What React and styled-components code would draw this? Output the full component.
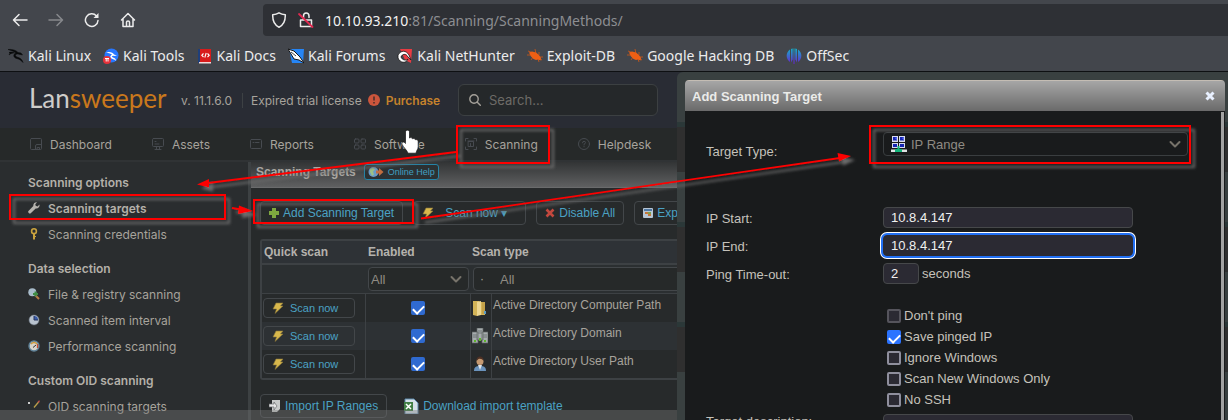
import React from 'react';
import styled, { createGlobalStyle, css } from 'styled-components';

const sans = '"Liberation Sans", Arial, sans-serif';
const brand = 'Inter, "Noto Sans", sans-serif';

const GlobalStyle = createGlobalStyle`
  * { box-sizing: border-box; }
  body { margin: 0; background: #292c2e; overflow: hidden; }
  a { color: inherit; text-decoration: none; }
  button, input, select { font: inherit; color: inherit; margin: 0; }
  svg { display: block; flex: none; }
`;

const Page = styled.div`
  display: flex;
  flex-direction: column;
  height: 100vh;
  overflow: hidden;
  position: relative;
`;

/* browser chrome */
const Chrome = styled.header`
  flex: none;
  background: #43464c;
  border-bottom: 1px solid #0e1012;
  font-family: "Noto Sans", sans-serif;
  color: #ececec;
`;
const Toolbar = styled.div`
  display: flex;
  align-items: center;
  height: 40px;
`;
const NavButtons = styled.div`
  display: flex;
  gap: 20px;
  padding-left: 12px;
  width: 263px;
`;
const IconButton = styled.button`
  border: 0;
  padding: 0;
  background: none;
  width: 16px;
  height: 16px;
  opacity: ${(p) => (p.disabled ? 0.4 : 1)};
`;
const CloseButton = styled.button`
  border: 0;
  padding: 0;
  background: none;
`;
const AddressBar = styled.div`
  flex: 1;
  height: 32px;
  display: flex;
  align-items: center;
  gap: 11px;
  padding-left: 8px;
  background: #2e3035;
  border-radius: 4px 0 0 4px;
`;
const Url = styled.span`
  font-size: 14px;
  color: #8d8e92;
  b { font-weight: 400; color: #f2f2f2; }
`;
const Bookmarks = styled.nav`
  display: flex;
  align-items: center;
  gap: 12px;
  height: 31px;
  padding-left: 8px;
  white-space: nowrap;
`;
const Bookmark = styled.a`
  display: flex;
  align-items: center;
  gap: 4px;
  font-size: 14px;
`;

/* application */
const AppArea = styled.div`
  flex: 1;
  min-height: 0;
  display: flex;
  flex-direction: column;
  position: relative;
  font-family: ${brand};
  color: #a7a39c;
`;
const AppHeader = styled.div`
  flex: none;
  display: flex;
  align-items: center;
  height: 56px;
  padding-left: 29px;
  background: #292c34;
  font-size: 12px;
`;
const Logo = styled.a`
  width: 152px;
  font-family: Lato, sans-serif;
  font-size: 26px;
  line-height: 32px;
  color: #cfcdca;
  padding-bottom: 4px;
  span { color: #c9781c; }
`;
const Version = styled.span`
  width: 62px;
  border-right: 1px solid #3d4144;
`;
const License = styled.span`
  display: flex;
  align-items: center;
  gap: 6px;
  padding-left: 8px;
  width: 215px;
  white-space: nowrap;
`;
const Purchase = styled.a`
  color: #c5822c;
  font-weight: 600;
`;
const SearchBox = styled.label`
  display: flex;
  align-items: center;
  gap: 8px;
  width: 200px;
  height: 32px;
  padding-left: 10px;
  border: 1px solid #3c4042;
  border-radius: 6px;
  background: #25282a;
`;
const SearchInput = styled.input`
  width: 120px;
  border: 0;
  background: none;
  padding: 0;
  font-size: 13px;
  &::placeholder { color: #6d6b67; }
`;
const MainNav = styled.nav`
  flex: none;
  display: flex;
  align-items: center;
  gap: 40px;
  height: 34px;
  padding-left: 30px;
  background: #262929;
  border-bottom: 2px solid #303335;
`;
const NavLink = styled.a`
  display: flex;
  align-items: center;
  gap: 8px;
  font-size: 12px;
`;
const Columns = styled.div`
  flex: 1;
  min-height: 0;
  display: flex;
`;
const Sidebar = styled.aside`
  flex: none;
  width: 251px;
  padding: 8px 0 0 28px;
  border-right: 3px solid #3d4143;
  background: #2a2d2f;
  font-size: 12px;
  overflow: hidden;
`;
const SideHeading = styled.div`
  line-height: 26px;
  font-weight: 600;
  color: #b4b0a9;
  &:not(:first-child) { margin-top: 8px; }
`;
const SideLink = styled.a`
  display: flex;
  align-items: center;
  gap: 8px;
  height: 26px;
  padding-bottom: 2px;
  ${(p) => p.$active && css`font-weight: 600; color: #b4b0a9;`}
`;
const Main = styled.main`
  flex: 1;
  min-width: 0;
  overflow: hidden;
  background: #272a2b;
  font-family: ${sans};
  font-size: 12px;
`;
const TitleBar = styled.div`
  display: flex;
  align-items: center;
  gap: 8px;
  height: 26px;
  padding: 0 0 6px 5px;
  background: linear-gradient(#323435, #5f6061);
  border-bottom: 1px solid #6a6b6c;
`;
const PageTitle = styled.h1`
  margin: 0;
  font-size: 12px;
  color: #aaa7a2;
`;
const HelpLink = styled.a`
  display: flex;
  align-items: center;
  gap: 4px;
  height: 16px;
  padding: 0 3px;
  border: 1px solid #2583a6;
  border-radius: 3px;
  background: #2c3133;
  color: #41a0c2;
  font-size: 9px;
`;
const Content = styled.div`
  padding: 13px 0 0 9px;
`;
const ButtonRow = styled.div`
  display: flex;
  align-items: center;
  gap: ${(p) => p.$gap || 10}px;
`;
const Button = styled.button`
  display: flex;
  align-items: center;
  gap: ${(p) => p.$gap || 4}px;
  height: ${(p) => p.$height || 24}px;
  padding: 0 ${(p) => p.$end || 8}px 0 8px;
  border: 1px solid #43474a;
  border-radius: 4px;
  background: none;
  color: #4ba2c4;
  font-size: ${(p) => p.$size || 12}px;
  white-space: nowrap;
`;
const TargetTable = styled.table`
  width: 100%;
  margin: 14px 0;
  table-layout: fixed;
  border-collapse: separate;
  border-spacing: 0;
  border: 2px solid #3d4144;
  border-right: 0;
  border-radius: 3px;
`;
const HeadCell = styled.th`
  width: ${(p) => p.$width || 'auto'};
  height: 24px;
  padding: 0 0 0 ${(p) => p.$inset || 2}px;
  text-align: left;
  white-space: nowrap;
  color: #b5b2ad;
  background: #2e3236;
  border-bottom: 2px solid #3d4144;
`;
const FilterCell = styled.td`
  height: 29px;
  padding: 0 1px 0 3px;
  background: #2b2f31;
  border-bottom: 1px solid #3d4144;
`;
const BodyCell = styled.td`
  height: 28px;
  padding: ${(p) => (p.$name ? '4px 1px' : '0 1px')};
  border-left: ${(p) => (p.$line ? '1px solid #3d4144' : '0')};
  text-align: ${(p) => (p.$center ? 'center' : 'left')};
  vertical-align: ${(p) => (p.$name ? 'top' : 'middle')};
`;
const BodyRow = styled.tr`
  background: ${(p) => (p.$odd ? '#2d3134' : '#272a2b')};
`;
const SelectBox = styled.div`
  position: relative;
  display: flex;
  align-items: center;
  width: 100%;
  height: 24px;
  border: 1px solid ${(p) => (p.$dark ? '#3a3e40' : '#43474a')};
  border-radius: 4px;
  background: ${(p) => (p.$dark ? '#191b1c' : '#262929')};
`;
const Select = styled.select`
  appearance: none;
  width: 100%;
  height: 100%;
  border: 0;
  padding: 0 0 0 ${(p) => p.$inset}px;
  background: none;
  color: #8f8b83;
  font-size: 13px;
  outline: none;
`;
const SelectMark = styled.span`
  position: absolute;
  pointer-events: none;
  ${(p) => (p.$left ? `left: ${p.$left}px;` : 'right: 6px;')}
`;
const Check = styled.input`
  appearance: none;
  flex: none;
  display: inline-grid;
  place-items: center;
  vertical-align: middle;
  width: 14px;
  height: 14px;
  border: 2px solid ${(p) => (p.$muted ? '#55545c' : '#8f8f9d')};
  border-radius: 2px;
  background: #2b2a33;
  &:checked {
    border-color: ${(p) => p.$blue || '#2b73ff'};
    background: ${(p) => p.$blue || '#2b73ff'};
  }
  &:checked::after {
    content: '';
    width: 5px;
    height: 9px;
    margin-bottom: 2px;
    border: solid #fff;
    border-width: 0 2px 2px 0;
    transform: rotate(45deg);
  }
`;
const DownloadLink = styled.a`
  display: flex;
  align-items: center;
  gap: 4px;
  color: #4ba2c4;
`;
const StatusStrip = styled.div`
  position: absolute;
  left: 0;
  right: 0;
  bottom: 0;
  height: 10px;
  background: rgba(120, 120, 120, 0.4);
`;

/* dialog */
const Backdrop = styled.div`
  position: absolute;
  left: 677px;
  right: 0;
  top: 0;
  bottom: 0;
  display: flex;
  padding: 8px 3px 0 8px;
  border-radius: 6px 0 0 0;
  background: linear-gradient(#394040, #394040) top / 100% 8px no-repeat,
    repeating-linear-gradient(#394040 0 50px, #2b3838 50px 55px, #2f2f2f 55px 100px);
  font-family: ${sans};
  font-size: 13px;
  color: #c5c2bb;
`;
const Dialog = styled.section`
  flex: 1;
  display: flex;
  flex-direction: column;
  border-radius: 4px 4px 0 0;
  overflow: hidden;
  background: #191b1c;
`;
const DialogTitle = styled.div`
  flex: none;
  display: flex;
  align-items: center;
  justify-content: space-between;
  height: 31px;
  padding: 0 10px 0 7px;
  border-top: 1px solid #c4bdb4;
  background: linear-gradient(#a6a6a6, #6a6a6a);
  h2 { margin: 0; font-size: 13px; color: #ebebe9; }
`;
const DialogBody = styled.form`
  flex: 1;
  min-height: 0;
  overflow: hidden;
  margin: 1px 1px 0 0;
  padding: 20px 33px 0 21px;
  border-right: 3px solid #a2a2a2;
`;
const Field = styled.div`
  display: grid;
  grid-template-columns: 177px 1fr;
  align-items: center;
  min-height: 28px;
`;
const TypeField = styled(Field)`
  align-items: start;
  height: 71px;
`;
const DescriptionField = styled(Field)`
  align-items: start;
  padding-top: 4px;
`;
const FieldLabel = styled.label`
  padding-top: ${(p) => p.$drop ?? 3}px;
  line-height: 15px;
`;
const TextInput = styled.input`
  width: ${(p) => p.$width || 250}px;
  height: 21px;
  padding: 0 7px;
  border: 1px solid #46484a;
  border-radius: 4px;
  background: #2b2a33;
  color: #f0f0f0;
  outline: none;
  ${(p) => p.$focus && css`
    border-color: #2b2a33;
    box-shadow: 0 0 0 2px #2270f5, 0 0 0 3px #fff;
  `}
`;
const Inline = styled.span`
  display: flex;
  align-items: center;
  gap: 3px;
`;
const Options = styled.div`
  padding: 18px 0 0 181px;
`;
const Option = styled.label`
  display: flex;
  align-items: center;
  gap: 3px;
  height: 21px;
`;
const Annotations = styled.svg`
  position: absolute;
  left: 0;
  top: 0;
  pointer-events: none;
`;

const Line = ({ children, size = 16, color = 'currentColor', w = 1.5, box = 16 }) => (
  <svg width={size} height={size} viewBox={`0 0 ${box} ${box}`} fill="none" stroke={color} strokeWidth={w} strokeLinecap="round" strokeLinejoin="round">
    {children}
  </svg>
);
const Pic = ({ children, size = 16, box = 16 }) => (
  <svg width={size} height={size} viewBox={`0 0 ${box} ${box}`}>{children}</svg>
);
const Bolt = ({ size = 12 }) => (
  <Pic size={size} box={12}><path d="M4 1h7L8.500 4H11L3 11.500 4.500 7H1z" fill="#d8b84c" stroke="#86743a" strokeWidth=".6" /></Pic>
);
const Chevron = () => (
  <Line size={12} box={12} color="#77736a" w={2}><path d="M1.500 4 6 8.500 10.500 4" /></Line>
);
const Bug = () => (
  <Pic>
    <path d="M1 3l5 2M0 7l5 0M4 12l2-3M8 1l1 5M12 4l0 3M16 9l-4 0M12 14l-1-3M15 12l-2-1" stroke="#b5541f" strokeWidth="1" fill="none" />
    <path d="M2 4.500 5 3.500l4 1L12 7l2 3-.5 2.500-2.500-1-2 .5L6.500 11 4 8.500z" fill="#ee5f14" />
  </Pic>
);

const bookmarks = [
  ['Kali Linux', <Pic><path d="M0 1.500c4-.5 8 .5 10 3l3 .5 1.500 2-2.500-.5-2-.5c-3 0-3.500 2-1 3 3 1 5 2 6 5.500-2-2.500-4-3.500-6.500-4C5 9.500 5 6 8 5 5.500 3 3 2.500 0 1.500zM1 4.500c2-.7 4-.5 5.500.5C4.500 5 2.500 5.500 1 7l1-1.800z" fill="#090a0b" stroke="#090a0b" strokeWidth=".5" /></Pic>],
  ['Kali Tools', <Pic><circle cx="8.500" cy="7.500" r="7" fill="#2777ff" /><path d="M2 4.500c5-1.500 8 0 9 2l3 1-3 .5c-2-.5-3 .5-1 1.500 2 .8 3 1.500 3 3.500-1-1.500-3-1.800-4.500-2.500-2-1-1.500-3 .5-4C6 5 4 4.500 2 4.500z" fill="#fff" /><circle cx="4" cy="12" r="4" fill="#e8323a" /><path d="M2 10.500h4M3.200 10.500v3M5 10.500v3" stroke="#fff" strokeWidth="1" /></Pic>],
  ['Kali Docs', <Pic><path d="M1 1h3v14H1z" fill="#1f3f7a" /><path d="M3 1h11v13H3z" fill="#d81b1b" /><path d="M2 14h12v1.500H2z" fill="#f2d9d9" /><path d="M6.500 5.500 4.800 7.300l1.700 1.700M10.500 5.500l1.700 1.800L10.500 9M9.200 5l-1.400 4.500" stroke="#fff" strokeWidth="1.100" fill="none" /></Pic>],
  ['Kali Forums', <Pic><path d="M1 1h15l-1 14H4z" fill="#2685f5" /><path d="M0 1l6 2 3 3 3 3 4 6-5-3-5-1-3-5z" fill="#fff" stroke="#161616" strokeWidth="1" /><path d="M3 4l5 4" stroke="#161616" strokeWidth=".8" /></Pic>],
  ['Kali NetHunter', <Pic><path d="M3 1h12l-1 14-6-3z" fill="#e93b42" /><path d="M1 7c3-5 8-5 11 0l2 5-3-3c-2-4-6-3-7 0 1 3 5 4 7 2-2 5-8 4-10-1z" fill="#fff" stroke="#151515" strokeWidth=".8" /></Pic>],
  ['Exploit-DB', <Bug />],
  ['Google Hacking DB', <Bug />],
  ['OffSec', <Pic><defs><linearGradient id="off" x1="0" y1="0" x2="0" y2="16" gradientUnits="userSpaceOnUse"><stop offset="0" stopColor="#10b4c8" /><stop offset="1" stopColor="#6a20d0" /></linearGradient></defs><path d="M4 1.500v12.500a7.500 7.500 0 0 1 0-12.500zM12 1.500v12.500a7.500 7.500 0 0 0 0-12.500zM5 1l1.700-.5v11L5 14.500zM9.300.5 11 1v13.500l-1.700-3zM7.500.5h1V16h-1z" fill="url(#off)" /></Pic>],
];

const navItems = [
  ['Dashboard', <><rect x=".5" y=".5" width="11" height="11" rx="1" /><path d="M5.500 11.500V8q0-1.500 1.500-1.500h4.500M7.500 9.500h2v2h-2z" /></>],
  ['Assets', <><rect x=".5" y=".5" width="11" height="8" rx="1" /><path d="M3 3.500h1M3 6h4M4.500 8.500v3h3v-3M3 11.500h6" /></>],
  ['Reports', <><rect x=".5" y="1.500" width="11" height="9" rx="1" /><path d="M3 4.500h1M5.500 4.500h3.500" /></>],
  ['Software', <><rect x=".5" y="1" width="4.500" height="4" rx="1" /><rect x="7" y="1" width="4.500" height="4" rx="1" /><rect x=".5" y="7" width="4.500" height="4" rx="1" /><rect x="7" y="7" width="4.500" height="4" rx="1" /></>],
  ['Scanning', <><path d="M.5 3V.5H3M9 .5h2.500V3M11.500 9v2.500H9M3 11.500H.5V9M3.500 3.500h5v5h-5zM5.500 5.500v3M3 3h6" /></>],
  ['Helpdesk', <><circle cx="6" cy="6" r="5.500" /><path d="M4.500 4.800Q4.500 3.300 6 3.300t1.500 1.300Q7.500 5.500 6 6.300v.7M6 8.500v.3" /></>],
];

const sideGroups = [
  ['Scanning options', [
    ['Scanning targets', <Pic size={12} box={12}><path d="M11.500 2.500 9.500 4.500 7.700 3.800 7.300 2.300 9 .3C7 0 5 1.500 5.300 4L.7 8.700a1.500 1.500 0 0 0 2.300 2.300L7.700 6.500c2.300.5 4.300-1.500 3.800-4z" fill="#b5b2ad" /></Pic>],
    ['Scanning credentials', <Pic size={12} box={12}><path d="M5 5h2v6L6 12 5 11zM6 8h2v1H6z" fill="#c9a23e" /><circle cx="6" cy="3.200" r="2.400" fill="none" stroke="#c9a23e" strokeWidth="1.600" /></Pic>],
  ]],
  ['Data selection', [
    ['File & registry scanning', <Pic size={12} box={12}><path d="M7 7l4 4" stroke="#b97a45" strokeWidth="2" /><circle cx="4.300" cy="4.200" r="4" fill="#a9bccb" /><path d="M7.500 3.500v5M5 6h5" stroke="#3f8d45" strokeWidth="2" /></Pic>],
    ['Scanned item interval', <Pic size={12} box={12}><circle cx="6" cy="6" r="5" fill="#b9c3cf" stroke="#68727e" strokeWidth=".6" /><path d="M6 2v4h4A4 4 0 0 0 6 2z" fill="#395ba8" /><path d="M6 2v4h4" stroke="#26355c" fill="none" /></Pic>],
    ['Performance scanning', <Pic size={12} box={12}><circle cx="6" cy="6" r="5" fill="#d7d4cc" stroke="#5f8298" strokeWidth="1.400" /><path d="M3 4Q6 1 9 4" stroke="#d09b3c" fill="none" strokeWidth="1.400" /><path d="M9.500 4v4" stroke="#c54d35" strokeWidth="1.300" /><path d="M5 7.500 8 5" stroke="#333" /></Pic>],
  ]],
  ['Custom OID scanning', [
    ['OID scanning targets', <Pic size={12} box={12}><path d="M6 7.500 11 1.500" stroke="#b9a04a" strokeWidth="1.300" /><path d="M10 2.500 11.500.7" stroke="#c24b4b" strokeWidth="1.300" /><path d="M0 2h2v2H0z" fill="#ccc" /></Pic>],
  ]],
];

const targets = [
  ['Active Directory Computer Path', <Pic><path d="M1 1h6l1 1h5v13H6l-1 1-4-1z" fill="#d3b458" /><path d="M5 2l4-1v14l-4 1z" fill="#ecd692" /><path d="M10 2h3v12h-3z" fill="#c4a24a" /><path d="M12 11h2v3h-2z" fill="#5d9bc4" /></Pic>],
  ['Active Directory Domain', <Pic><path d="M5 0h6v12H5zM0 4h6v11H0zM10 4h6v11h-6z" fill="#a6acae" stroke="#5b6163" strokeWidth=".7" /><path d="M6 3h4M6 5h4M1 7h4M1 9h4M11 7h4M11 9h4" stroke="#6c7375" /><path d="M2 12h2v2H2zM7 10h2v3H7zM12 12h2v2h-2z" fill="#5cb52b" /></Pic>],
  ['Active Directory User Path', <Pic><path d="M2 15c0-4 2-5 6-5s6 1 6 5z" fill="#6a93bd" /><path d="M6 9h4l-2 5z" fill="#dfe5ea" /><circle cx="8" cy="5.500" r="3.500" fill="#c69a72" /><path d="M4.500 5c-.5-6 7.500-6 7 0-1-2-3-2.500-5-2z" fill="#4d3024" /></Pic>],
];

const options = [
  ["Don't ping", false, true],
  ['Save pinged IP', true],
  ['Ignore Windows', false],
  ['Scan New Windows Only', false],
  ['No SSH', false],
];

function BrowserChrome() {
  return (
    <Chrome>
      <Toolbar>
        <NavButtons>
          <IconButton aria-label="Back"><Line><path d="M15 8H1.500M7 2.500 1.500 8 7 13.500" /></Line></IconButton>
          <IconButton aria-label="Forward" disabled><Line><path d="M1 8h13.500M9 2.500 14.500 8 9 13.500" /></Line></IconButton>
          <IconButton aria-label="Reload"><Line><path d="M14 8.500A6.300 6.300 0 1 1 12.500 4" /><path d="M14.500 1v5h-5z" fill="currentColor" stroke="none" /></Line></IconButton>
          <IconButton aria-label="Home"><Line><path d="M1.500 8 8 1.500 14.500 8M3 7v7.500h10V7M6.500 14.500V10q0-1 1.500-1t1.500 1v4.500" /></Line></IconButton>
        </NavButtons>
        <AddressBar>
          <Line><path d="M8 .8c2 1.200 4 1.700 6.300 1.900C14.500 8.500 13 13 8 15.200 3 13 1.500 8.500 1.700 2.700 4 2.500 6 2 8 .8z" /></Line>
          <Line><path d="M2.500 8h11v6.500h-11zM5.500 8V4q0-3 2.700-3T11 4v1.500" /><path d="M1 2l13.500 13" stroke="#e22850" strokeWidth="1.800" /></Line>
          <Url><b>10.10.93.210</b>:81/Scanning/ScanningMethods/</Url>
        </AddressBar>
      </Toolbar>
      <Bookmarks>
        {bookmarks.map(([name, icon]) => <Bookmark key={name} href="#">{icon}{name}</Bookmark>)}
      </Bookmarks>
    </Chrome>
  );
}

function TargetsPage() {
  return (
    <Main>
      <TitleBar>
        <PageTitle>Scanning Targets</PageTitle>
        <HelpLink href="#">
          <svg width="16" height="12" viewBox="0 0 16 12"><circle cx="5.500" cy="6" r="5" fill="#6a9cc8" /><path d="M2 3l3-1.500 2 2-2 2 1 3-2 1.500-2-4z" fill="#9cc187" /><path d="M8 4.500h3V2l4.500 4-4.500 4V7.500H8z" fill="#c26d40" /></svg>
          Online Help
        </HelpLink>
      </TitleBar>
      <Content>
        <ButtonRow>
          <Button><Pic size={10} box={10}><path d="M3 0h4v3h3v4H7v3H3V7H0V3h3z" fill="#7ea73f" /></Pic>Add Scanning Target</Button>
          <Button $gap={11} $end={18}><Bolt />Scan now ▾</Button>
          <Button><Pic size={10} box={10}><path d="M1.500 1.500l7 7M8.500 1.500l-7 7" stroke="#c4483e" strokeWidth="2.600" /></Pic>Disable All</Button>
          <Button><Pic size={10} box={10}><rect width="10" height="10" rx="1" fill="#b7c6d5" /><path d="M1 1h8v2H1z" fill="#5079a4" /><path d="M2 4h3v2H2zM5 6h3v2H5z" fill="#c5763a" /><path d="M5 4h3v2H5z" fill="#7da04b" /></Pic>Export</Button>
        </ButtonRow>
        <TargetTable>
          <thead>
            <tr>
              <HeadCell $width="103px">Quick scan</HeadCell>
              <HeadCell $width="105px" $inset={3}>Enabled</HeadCell>
              <HeadCell $width="21px">Scan type</HeadCell>
              <HeadCell />
            </tr>
          </thead>
          <tbody>
            <tr>
              <FilterCell />
              <FilterCell>
                <SelectBox>
                  <Select $inset={2} aria-label="Enabled"><option>All</option></Select>
                  <SelectMark><Chevron /></SelectMark>
                </SelectBox>
              </FilterCell>
              <FilterCell colSpan={2}>
                <SelectBox>
                  <SelectMark $left={6}>·</SelectMark>
                  <Select $inset={26} aria-label="Scan type"><option>All</option></Select>
                </SelectBox>
              </FilterCell>
            </tr>
            {targets.map(([name, icon], i) => (
              <BodyRow key={name} $odd={i % 2 === 1}>
                <BodyCell><Button $height={20} $gap={6} $end={16} $size={11}><Bolt />Scan now</Button></BodyCell>
                <BodyCell $line $center><Check type="checkbox" defaultChecked $blue="#2f6ad0" aria-label={`${name} enabled`} /></BodyCell>
                <BodyCell $line>{icon}</BodyCell>
                <BodyCell $line $name>{name}</BodyCell>
              </BodyRow>
            ))}
          </tbody>
        </TargetTable>
        <ButtonRow $gap={16}>
          <Button><Pic size={12} box={12}><path d="M3 0h8v9L8 12H3z" fill="#c9cbca" /><path d="M0 4h5V2l3 4-3 4V7H0z" fill="#e6e6e6" stroke="#686c6d" strokeWidth=".7" /></Pic>Import IP Ranges</Button>
          <DownloadLink href="#"><Pic><path d="M2 1h9l4 4v11H2z" fill="#d6e2ea" stroke="#5c88aa" /><path d="M1 4h9v9H1z" fill="#417f45" /><path d="M3 6l5 5M8 6l-5 5" stroke="#fff" strokeWidth="1.500" /></Pic>Download import template</DownloadLink>
        </ButtonRow>
      </Content>
    </Main>
  );
}

function AddTargetDialog() {
  return (
    <Backdrop>
      <Dialog role="dialog" aria-label="Add Scanning Target">
        <DialogTitle>
          <h2>Add Scanning Target</h2>
          <CloseButton aria-label="Close"><Pic size={10} box={10}><path d="M1.500 1.500l7 7M8.500 1.500l-7 7" stroke="#e8f0ff" strokeWidth="3" /></Pic></CloseButton>
        </DialogTitle>
        <DialogBody>
          <TypeField>
            <FieldLabel htmlFor="type" $drop={12}>Target Type:</FieldLabel>
            <SelectBox $dark>
              <SelectMark $left={7}>
                <Pic><path d="M1 0h6v6H1zM8 0h6v6H8zM1 7h6v5H1zM8 7h6v5H8z" fill="#d8dcf0" /><path d="M2 1h4v3.500H2zM9 1h4v3.500H9zM2 8h4v3H2zM9 8h4v3H9z" fill="#1725b4" /><path d="M4 2l2 2.500V1zM11 2l2 2.500V1z" fill="#5a6cf0" /><path d="M0 13.500h16V16H0z" fill="#dfe3e3" /><path d="M6.500 10h2v3h2.500v3H4v-3h2.500z" fill="#12b57a" /></Pic>
              </SelectMark>
              <Select id="type" $inset={27}><option>IP Range</option></Select>
              <SelectMark><Chevron /></SelectMark>
            </SelectBox>
          </TypeField>
          <Field>
            <FieldLabel htmlFor="start">IP Start:</FieldLabel>
            <TextInput id="start" defaultValue="10.8.4.147" />
          </Field>
          <Field>
            <FieldLabel htmlFor="end">IP End:</FieldLabel>
            <TextInput id="end" $focus defaultValue="10.8.4.147" />
          </Field>
          <Field>
            <FieldLabel htmlFor="ping">Ping Time-out:</FieldLabel>
            <Inline><TextInput id="ping" $width={36} defaultValue="2" />seconds</Inline>
          </Field>
          <Options>
            {options.map(([label, checked, muted]) => (
              <Option key={label}><Check type="checkbox" defaultChecked={checked} $muted={muted} />{label}</Option>
            ))}
          </Options>
          <DescriptionField>
            <FieldLabel htmlFor="description" $drop={0}>Target description:</FieldLabel>
            <TextInput id="description" />
          </DescriptionField>
        </DialogBody>
      </Dialog>
    </Backdrop>
  );
}

const frames = [[10, 195, 215, 24], [457, 126, 92, 37], [254, 200, 159, 23], [870, 126, 320, 37]];

export default function App() {
  return (
    <Page>
      <GlobalStyle />
      <BrowserChrome />
      <AppArea>
        <AppHeader>
          <Logo href="#">Lan<span>sweeper</span></Logo>
          <Version>v. 11.1.6.0</Version>
          <License>
            Expired trial license
            <Pic size={12} box={12}><circle cx="6" cy="6" r="6" fill="#cb553c" /><path d="M6 2.500v4M6 8v1.500" stroke="#3a2a2a" strokeWidth="1.400" /></Pic>
            <Purchase href="#">Purchase</Purchase>
          </License>
          <SearchBox>
            <Line size={12} box={12} w={1.4} color="#a5a19a"><circle cx="5" cy="5" r="4.200" /><path d="M8 8l3.300 3.300" /></Line>
            <SearchInput placeholder="Search..." aria-label="Search" />
          </SearchBox>
        </AppHeader>
        <MainNav>
          {navItems.map(([name, icon]) => (
            <NavLink key={name} href="#"><Line size={12} box={12} w={1} color="#474b50">{icon}</Line>{name}</NavLink>
          ))}
        </MainNav>
        <Columns>
          <Sidebar>
            {sideGroups.map(([title, links]) => (
              <React.Fragment key={title}>
                <SideHeading>{title}</SideHeading>
                {links.map(([name, icon]) => (
                  <SideLink key={name} href="#" $active={name === 'Scanning targets'}>{icon}{name}</SideLink>
                ))}
              </React.Fragment>
            ))}
          </Sidebar>
          <TargetsPage />
        </Columns>
        <StatusStrip />
        <AddTargetDialog />
      </AppArea>
      <Annotations width="1228" height="420" viewBox="0 0 1228 420">
        <defs>
          <filter id="shade" x="0" y="0" width="1228" height="420" filterUnits="userSpaceOnUse">
            <feDropShadow dx="4" dy="4" stdDeviation="1.500" floodColor="#6c6c6c" floodOpacity="1" />
          </filter>
        </defs>
        <path d="M405.500 132c0-2.500 4-2.500 4 0v6c1.200-.8 2.700-.3 3 .8 1.200-.6 2.600-.2 2.900.9 1.300-.4 2.800.4 2.800 2v5c0 2.500-1.700 3.500-2.200 6.500h-8c-1.200-3.500-4.500-5.500-6-9-.7-1.800 1-3 2.500-1.700l1 1z" fill="#fff" stroke="#111" strokeWidth=".7" />
        <g filter="url(#shade)">
          {frames.map(([x, y, w, h]) => (
            <rect key={x} x={x} y={y} width={w} height={h} fill="none" stroke="#fe0000" strokeWidth="2" />
          ))}
          <path d="M456 152 208 183M232 208l12 2M421 218.500 840 158" stroke="#fe0000" strokeWidth="1.800" />
          <path d="M197 184.500 209 179v8.500zM253 211l-14-5.500-1 8.500zM851 156l-13.500-3 1.500 8.500z" fill="#fe0000" />
        </g>
      </Annotations>
    </Page>
  );
}
